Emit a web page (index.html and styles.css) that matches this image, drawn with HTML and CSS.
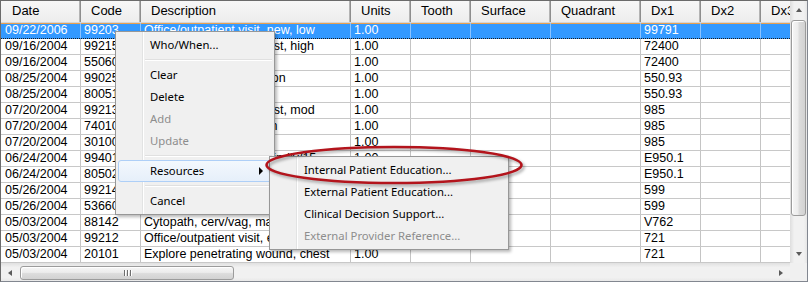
FILE: index.html
```html
<!DOCTYPE html>
<html>
<head>
<meta charset="utf-8">
<link rel="stylesheet" href="styles.css">
</head>
<body>
<div class="window">
  <div class="main">
    <div class="grid">
      <div class="row head">
        <div class="c c1">Date</div><div class="c c2">Code</div><div class="c c3">Description</div><div class="c c4">Units</div><div class="c c5">Tooth</div><div class="c c6">Surface</div><div class="c c7">Quadrant</div><div class="c c8">Dx1</div><div class="c c9">Dx2</div><div class="c c10">Dx3</div>
      </div>
      <div class="row sel">
        <div class="c c1">09/22/2006</div><div class="c c2">99203</div><div class="c c3">Office/outpatient visit, new, low</div><div class="c c4">1.00</div><div class="c c5"></div><div class="c c6"></div><div class="c c7"></div><div class="c c8">99791</div><div class="c c9"></div><div class="c c10"></div>
      </div>
      <div class="row">
        <div class="c c1">09/16/2004</div><div class="c c2">99215</div><div class="c c3">Office/outpatient visit, est, high</div><div class="c c4">1.00</div><div class="c c5"></div><div class="c c6"></div><div class="c c7"></div><div class="c c8">72400</div><div class="c c9"></div><div class="c c10"></div>
      </div>
      <div class="row">
        <div class="c c1">09/16/2004</div><div class="c c2">55060</div><div class="c c3">Repair of hydrocele</div><div class="c c4">1.00</div><div class="c c5"></div><div class="c c6"></div><div class="c c7"></div><div class="c c8">72400</div><div class="c c9"></div><div class="c c10"></div>
      </div>
      <div class="row">
        <div class="c c1">08/25/2004</div><div class="c c2">99025</div><div class="c c3">Confirmatory consultation</div><div class="c c4">1.00</div><div class="c c5"></div><div class="c c6"></div><div class="c c7"></div><div class="c c8">550.93</div><div class="c c9"></div><div class="c c10"></div>
      </div>
      <div class="row">
        <div class="c c1">08/25/2004</div><div class="c c2">80051</div><div class="c c3">Electrolyte panel</div><div class="c c4">1.00</div><div class="c c5"></div><div class="c c6"></div><div class="c c7"></div><div class="c c8">550.93</div><div class="c c9"></div><div class="c c10"></div>
      </div>
      <div class="row">
        <div class="c c1">07/20/2004</div><div class="c c2">99213</div><div class="c c3">Office/outpatient visit, est, mod</div><div class="c c4">1.00</div><div class="c c5"></div><div class="c c6"></div><div class="c c7"></div><div class="c c8">985</div><div class="c c9"></div><div class="c c10"></div>
      </div>
      <div class="row">
        <div class="c c1">07/20/2004</div><div class="c c2">74010</div><div class="c c3">X-ray exam of abdomen</div><div class="c c4">1.00</div><div class="c c5"></div><div class="c c6"></div><div class="c c7"></div><div class="c c8">985</div><div class="c c9"></div><div class="c c10"></div>
      </div>
      <div class="row">
        <div class="c c1">07/20/2004</div><div class="c c2">30100</div><div class="c c3">Intranasal biopsy</div><div class="c c4">1.00</div><div class="c c5"></div><div class="c c6"></div><div class="c c7"></div><div class="c c8">985</div><div class="c c9"></div><div class="c c10"></div>
      </div>
      <div class="row">
        <div class="c c1">06/24/2004</div><div class="c c2">99401</div><div class="c c3">Preventive counseling, indiv/15</div><div class="c c4">1.00</div><div class="c c5"></div><div class="c c6"></div><div class="c c7"></div><div class="c c8">E950.1</div><div class="c c9"></div><div class="c c10"></div>
      </div>
      <div class="row">
        <div class="c c1">06/24/2004</div><div class="c c2">80502</div><div class="c c3">Lab pathology consultation</div><div class="c c4">1.00</div><div class="c c5"></div><div class="c c6"></div><div class="c c7"></div><div class="c c8">E950.1</div><div class="c c9"></div><div class="c c10"></div>
      </div>
      <div class="row">
        <div class="c c1">05/26/2004</div><div class="c c2">99214</div><div class="c c3">Office/outpatient visit, est</div><div class="c c4">1.00</div><div class="c c5"></div><div class="c c6"></div><div class="c c7"></div><div class="c c8">599</div><div class="c c9"></div><div class="c c10"></div>
      </div>
      <div class="row">
        <div class="c c1">05/26/2004</div><div class="c c2">53660</div><div class="c c3">Dilation of urethra</div><div class="c c4">1.00</div><div class="c c5"></div><div class="c c6"></div><div class="c c7"></div><div class="c c8">599</div><div class="c c9"></div><div class="c c10"></div>
      </div>
      <div class="row">
        <div class="c c1">05/03/2004</div><div class="c c2">88142</div><div class="c c3">Cytopath, cerv/vag, manual</div><div class="c c4">1.00</div><div class="c c5"></div><div class="c c6"></div><div class="c c7"></div><div class="c c8">V762</div><div class="c c9"></div><div class="c c10"></div>
      </div>
      <div class="row">
        <div class="c c1">05/03/2004</div><div class="c c2">99212</div><div class="c c3">Office/outpatient visit, est</div><div class="c c4">1.00</div><div class="c c5"></div><div class="c c6"></div><div class="c c7"></div><div class="c c8">721</div><div class="c c9"></div><div class="c c10"></div>
      </div>
      <div class="row">
        <div class="c c1">05/03/2004</div><div class="c c2">20101</div><div class="c c3">Explore penetrating wound, chest</div><div class="c c4">1.00</div><div class="c c5"></div><div class="c c6"></div><div class="c c7"></div><div class="c c8">721</div><div class="c c9"></div><div class="c c10"></div>
      </div>
    </div>
    <div class="vscroll">
      <div class="sbtn"><span class="tri up"></span></div>
      <div class="vtrack"><div class="vthumb"></div></div>
      <div class="sbtn"><span class="tri down"></span></div>
    </div>
  </div>
  <div class="bottom">
    <div class="hscroll">
      <div class="hbtn"><span class="tri left"></span></div>
      <div class="htrack"><div class="hthumb"><span class="grip"></span><span class="grip"></span><span class="grip"></span></div></div>
      <div class="hbtn"><span class="tri right"></span></div>
    </div>
    <div class="corner"></div>
  </div>

  <div class="menu ctx">
    <div class="item">Who/When...</div>
    <div class="sep"></div>
    <div class="item">Clear</div>
    <div class="item">Delete</div>
    <div class="item dis">Add</div>
    <div class="item dis">Update</div>
    <div class="sep"></div>
    <div class="item hot">Resources<span class="arrow"></span></div>
    <div class="sep"></div>
    <div class="item">Cancel</div>
  </div>

  <div class="menu sub">
    <div class="item">Internal Patient Education...</div>
    <div class="item">External Patient Education...</div>
    <div class="item">Clinical Decision Support...</div>
    <div class="item dis">External Provider Reference...</div>
  </div>

  <svg class="ring" width="272" height="48" viewBox="0 0 272 48">
    <ellipse cx="131" cy="21" rx="127.5" ry="18" fill="none" stroke="#b3141c" stroke-width="2.6"/>
  </svg>
</div>
</body>
</html>
```

FILE: styles.css
```css
* { box-sizing: border-box; }
html, body { margin: 0; padding: 0; background: #fff; }

.window {
  position: relative;
  width: 808px;
  height: 282px;
  border: 1px solid #828790;
  border-top-color: #6b6b6b;
  border-left-color: #6b6b6b;
  background: #fff;
  display: flex;
  flex-direction: column;
  overflow: hidden;
  font-family: "Liberation Sans", Arial, sans-serif;
}

.main { display: flex; height: 262px; }

.grid { width: 789px; overflow: hidden; }

.row {
  display: flex;
  height: 16px;
  border-bottom: 1px solid #c8c8c8;
  font-size: 12.5px;
  line-height: 15px;
  color: #000;
  white-space: nowrap;
}

.c {
  flex: 0 0 auto;
  padding-left: 3px;
  border-right: 1px solid #c4c4c4;
  overflow: hidden;
}
.c1 { width: 80px; padding-left: 4px; }
.c2 { width: 60px; }
.c3 { width: 210px; }
.c4 { width: 60px; }
.c5 { width: 60px; }
.c6 { width: 80px; }
.c7 { width: 90px; }
.c8 { width: 60px; }
.c9 { width: 60px; }
.c10 { width: 60px; }

.row.head {
  height: 22px;
  line-height: 20px;
  font-size: 13px;
  background: linear-gradient(#f7f7f7, #ededed);
  border-bottom: 1px solid #d5d5d5;
}
.row.head .c {
  padding-left: 10px;
  border-right: 1px solid #8e8e8e;
  box-shadow: inset -1px 0 #b4b4b4;
}
.row.head .c1 { padding-left: 11px; }

.row.sel {
  background: #3399ff;
  color: #fff;
  border-bottom: 1px dotted #1a1a1a;
  box-shadow: inset 0 1px 0 0 #e8a050;
}
.row.sel .c { border-right-color: #8cc4ff; }

.vscroll {
  width: 17px;
  display: flex;
  flex-direction: column;
  background: linear-gradient(to right, #e2e2e2, #f1f1f1 20%, #f1f1f1 80%, #e6e6e6);
  border-left: 1px solid #e0e0e0;
}
.sbtn { height: 18px; display: flex; align-items: center; justify-content: center; }
.vtrack { flex: 1; padding: 1px 0 30px 0; display: flex; }
.vthumb {
  width: 15px;
  height: 196px;
  border: 1px solid #9b9b9b;
  border-radius: 3px;
  background: linear-gradient(to right, #f6f6f6 0%, #ececec 45%, #dcdcdc 55%, #d2d2d2 100%);
  box-shadow: inset 1px 1px 0 #fff;
}

.bottom { display: flex; height: 18px; }
.hscroll {
  width: 789px;
  display: flex;
  background: linear-gradient(#e4e4e4, #f1f1f1 20%, #f1f1f1 80%, #e8e8e8);
  border-top: 1px solid #e2e2e2;
}
.hbtn { width: 18px; display: flex; align-items: center; justify-content: center; }
.htrack { flex: 1; display: flex; align-items: center; padding-left: 1px; }
.hthumb {
  width: 214px;
  height: 14px;
  border: 1px solid #9b9b9b;
  border-radius: 3px;
  background: linear-gradient(#f6f6f6 0%, #ececec 45%, #dcdcdc 55%, #d2d2d2 100%);
  box-shadow: inset 1px 1px 0 #fff;
  display: flex;
  justify-content: center;
  align-items: center;
  gap: 2px;
}
.grip { width: 1px; height: 6px; background: #6e6e6e; box-shadow: 1px 0 #fff; }
.corner { width: 17px; background: #f0f0f0; }

.tri { width: 0; height: 0; border-style: solid; }
.tri.up { border-width: 0 3.5px 4px 3.5px; border-color: transparent transparent #5a5a5a transparent; }
.tri.down { border-width: 4px 3.5px 0 3.5px; border-color: #5a5a5a transparent transparent transparent; }
.tri.left { border-width: 3.5px 4px 3.5px 0; border-color: transparent #5a5a5a transparent transparent; }
.tri.right { border-width: 3.5px 0 3.5px 4px; border-color: transparent transparent transparent #5a5a5a; }

/* context menus */
.menu {
  position: absolute;
  background: #f0f0f0;
  border: 1px solid #979797;
  padding: 2px;
  box-shadow: 2px 2px 3px rgba(0,0,0,0.28);
  font-family: "Noto Sans", "Open Sans", sans-serif;
  font-size: 11.3px;
  color: #000;
  background-image: linear-gradient(to right, transparent 26px, #e2e3e3 26px, #e2e3e3 27px, #ffffff 27px, #ffffff 28px, transparent 28px);
}
.ctx { left: 114px; top: 30px; width: 160px; }
.sub { left: 268px; top: 155px; width: 240px; }

.item {
  position: relative;
  height: 22px;
  line-height: 21px;
  padding-left: 32px;
  white-space: nowrap;
}
.item.dis { color: #8d8d8d; }
.item.hot {
  border: 1px solid #aecff7;
  border-radius: 3px;
  background: linear-gradient(#f3f8fd, #e6effa);
  line-height: 19px;
  padding-left: 31px;
}
.arrow {
  position: absolute;
  right: 8px;
  top: 6px;
  width: 0; height: 0;
  border-style: solid;
  border-width: 4px 0 4px 4px;
  border-color: transparent transparent transparent #000;
}
.sep {
  height: 8px;
  margin-left: 27px;
  background: linear-gradient(transparent 3px, #e0e0e0 3px, #e0e0e0 4px, #fff 4px, #fff 5px, transparent 5px);
}

.ring {
  position: absolute;
  left: 262px;
  top: 143px;
  filter: drop-shadow(2px 2px 1.5px rgba(0,0,0,0.35));
}
```
